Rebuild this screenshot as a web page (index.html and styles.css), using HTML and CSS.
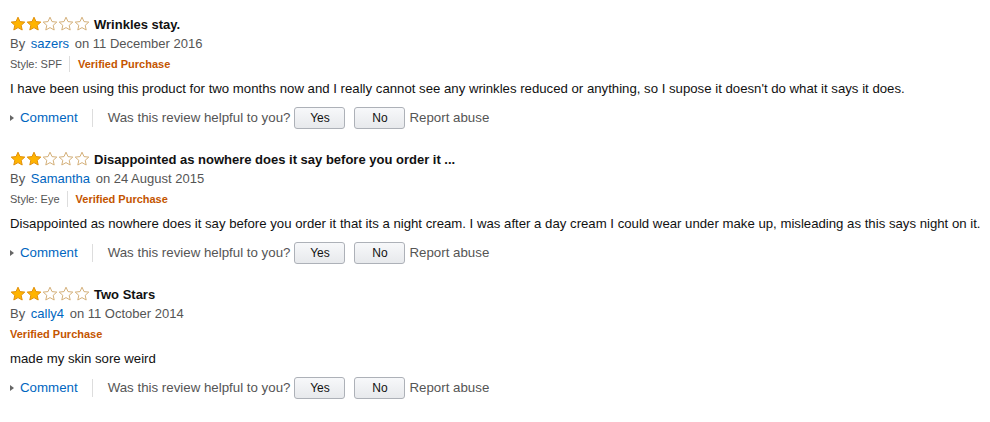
FILE: index.html
```html
<!DOCTYPE html>
<html lang="en">
<head>
  <meta charset="UTF-8" />
  <title>Customer reviews</title>
  <link rel="stylesheet" href="styles.css">
</head>
<body>
  <div class="reviews">

    <div class="review">
      <div class="review-title">
        <span class="stars">
          <svg width="80" height="16" viewBox="0 0 80 16">
            <path class="full" d="M8 1.2l2 4.4 4.8.5-3.6 3.2 1 4.7L8 11.6 3.8 14l1-4.7L1.2 6.1l4.8-.5z"/>
            <path class="full" transform="translate(16 0)" d="M8 1.2l2 4.4 4.8.5-3.6 3.2 1 4.7L8 11.6 3.8 14l1-4.7L1.2 6.1l4.8-.5z"/>
            <path class="empty" transform="translate(32 0)" d="M8 1.2l2 4.4 4.8.5-3.6 3.2 1 4.7L8 11.6 3.8 14l1-4.7L1.2 6.1l4.8-.5z"/>
            <path class="empty" transform="translate(48 0)" d="M8 1.2l2 4.4 4.8.5-3.6 3.2 1 4.7L8 11.6 3.8 14l1-4.7L1.2 6.1l4.8-.5z"/>
            <path class="empty" transform="translate(64 0)" d="M8 1.2l2 4.4 4.8.5-3.6 3.2 1 4.7L8 11.6 3.8 14l1-4.7L1.2 6.1l4.8-.5z"/>
          </svg>
        </span>
        <b>Wrinkles stay.</b>
      </div>
      <div class="byline">By <a href="#">sazers</a> on 11 December 2016</div>
      <div class="meta"><span class="style">Style: SPF</span><span class="verified">Verified Purchase</span></div>
      <p class="body">I have been using this product for two months now and I really cannot see any wrinkles reduced or anything, so I supose it doesn't do what it says it does.</p>
      <div class="actions">
        <a href="#" class="comment"><span class="arrow"></span>Comment</a>
        <span class="helpful">Was this review helpful to you?</span>
        <button class="vote">Yes</button>
        <button class="vote">No</button>
        <span class="report">Report abuse</span>
      </div>
    </div>

    <div class="review">
      <div class="review-title">
        <span class="stars">
          <svg width="80" height="16" viewBox="0 0 80 16">
            <path class="full" d="M8 1.2l2 4.4 4.8.5-3.6 3.2 1 4.7L8 11.6 3.8 14l1-4.7L1.2 6.1l4.8-.5z"/>
            <path class="full" transform="translate(16 0)" d="M8 1.2l2 4.4 4.8.5-3.6 3.2 1 4.7L8 11.6 3.8 14l1-4.7L1.2 6.1l4.8-.5z"/>
            <path class="empty" transform="translate(32 0)" d="M8 1.2l2 4.4 4.8.5-3.6 3.2 1 4.7L8 11.6 3.8 14l1-4.7L1.2 6.1l4.8-.5z"/>
            <path class="empty" transform="translate(48 0)" d="M8 1.2l2 4.4 4.8.5-3.6 3.2 1 4.7L8 11.6 3.8 14l1-4.7L1.2 6.1l4.8-.5z"/>
            <path class="empty" transform="translate(64 0)" d="M8 1.2l2 4.4 4.8.5-3.6 3.2 1 4.7L8 11.6 3.8 14l1-4.7L1.2 6.1l4.8-.5z"/>
          </svg>
        </span>
        <b>Disappointed as nowhere does it say before you order it ...</b>
      </div>
      <div class="byline">By <a href="#">Samantha</a> on 24 August 2015</div>
      <div class="meta"><span class="style">Style: Eye</span><span class="verified">Verified Purchase</span></div>
      <p class="body">Disappointed as nowhere does it say before you order it that its a night cream. I was after a day cream I could wear under make up, misleading as this says night on it.</p>
      <div class="actions">
        <a href="#" class="comment"><span class="arrow"></span>Comment</a>
        <span class="helpful">Was this review helpful to you?</span>
        <button class="vote">Yes</button>
        <button class="vote">No</button>
        <span class="report">Report abuse</span>
      </div>
    </div>

    <div class="review">
      <div class="review-title">
        <span class="stars">
          <svg width="80" height="16" viewBox="0 0 80 16">
            <path class="full" d="M8 1.2l2 4.4 4.8.5-3.6 3.2 1 4.7L8 11.6 3.8 14l1-4.7L1.2 6.1l4.8-.5z"/>
            <path class="full" transform="translate(16 0)" d="M8 1.2l2 4.4 4.8.5-3.6 3.2 1 4.7L8 11.6 3.8 14l1-4.7L1.2 6.1l4.8-.5z"/>
            <path class="empty" transform="translate(32 0)" d="M8 1.2l2 4.4 4.8.5-3.6 3.2 1 4.7L8 11.6 3.8 14l1-4.7L1.2 6.1l4.8-.5z"/>
            <path class="empty" transform="translate(48 0)" d="M8 1.2l2 4.4 4.8.5-3.6 3.2 1 4.7L8 11.6 3.8 14l1-4.7L1.2 6.1l4.8-.5z"/>
            <path class="empty" transform="translate(64 0)" d="M8 1.2l2 4.4 4.8.5-3.6 3.2 1 4.7L8 11.6 3.8 14l1-4.7L1.2 6.1l4.8-.5z"/>
          </svg>
        </span>
        <b>Two Stars</b>
      </div>
      <div class="byline">By <a href="#">cally4</a> on 11 October 2014</div>
      <div class="meta"><span class="verified only">Verified Purchase</span></div>
      <p class="body">made my skin sore weird</p>
      <div class="actions">
        <a href="#" class="comment"><span class="arrow"></span>Comment</a>
        <span class="helpful">Was this review helpful to you?</span>
        <button class="vote">Yes</button>
        <button class="vote">No</button>
        <span class="report">Report abuse</span>
      </div>
    </div>

  </div>
</body>
</html>
```

FILE: styles.css
```css
body {
  font-family: "Liberation Sans", Arial, sans-serif;
  background-color: #ffffff;
  color: #111;
  margin: 0;
}
.reviews {
  padding: 14px 0 0 10px;
}
.review {
  margin-bottom: 18px;
}
.review-title {
  display: flex;
  align-items: center;
  height: 20px;
  font-size: 13px;
}
.stars {
  display: flex;
  margin-right: 4px;
}
.stars .full {
  fill: #ffb400;
  stroke: #e1900a;
  stroke-width: 1;
}
.stars .empty {
  fill: #ffffff;
  stroke: #d4b07a;
  stroke-width: 1;
}
.byline {
  height: 20px;
  line-height: 20px;
  font-size: 13px;
  color: #555;
}
.byline a {
  color: #0066c0;
  text-decoration: none;
  margin: 0 2px;
}
.meta {
  height: 20px;
  display: flex;
  align-items: center;
  font-size: 11px;
}
.meta .style {
  color: #555;
  padding-right: 7px;
  margin-right: 8px;
  border-right: 1px solid #ddd;
  line-height: 16px;
}
.verified {
  color: #c45500;
  font-weight: bold;
}
.body {
  margin: 0;
  height: 30px;
  line-height: 30px;
  font-size: 13.2px;
  white-space: nowrap;
}
.actions {
  display: flex;
  align-items: center;
  height: 27px;
  font-size: 13.3px;
  color: #555;
}
.comment {
  display: flex;
  align-items: center;
  color: #0066c0;
  text-decoration: none;
  padding-right: 14px;
  margin-right: 15px;
  border-right: 1px solid #ddd;
  line-height: 18px;
}
.arrow {
  width: 0;
  height: 0;
  border-top: 3.5px solid transparent;
  border-bottom: 3.5px solid transparent;
  border-left: 4px solid #666;
  margin-right: 6px;
}
.vote {
  font-family: inherit;
  font-size: 12px;
  color: #111;
  width: 51px;
  height: 22px;
  margin-left: 4px;
  margin-right: 4px;
  padding: 0;
  border: 1px solid #adb1b8;
  border-radius: 3px;
  background: linear-gradient(#f7f8fa, #e7e9ec);
  cursor: pointer;
}
.vote + .vote {
  margin-left: 5px;
}
.report {
  margin-left: 0;
}
```
